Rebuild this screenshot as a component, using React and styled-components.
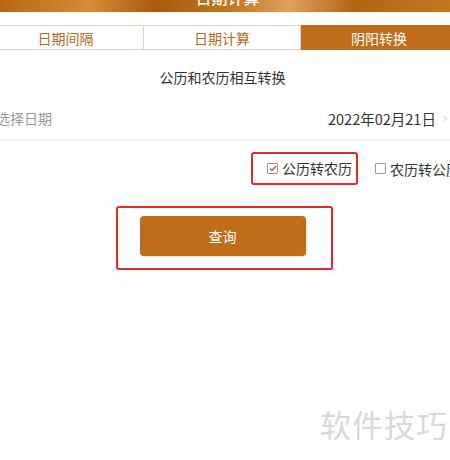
import React, { useState } from "react";
import styled, { createGlobalStyle } from "styled-components";

const GlobalStyle = createGlobalStyle`
  html, body {
    margin: 0;
    padding: 0;
    background: #fff;
    overflow: hidden;
  }
  body {
    font-family: "Noto Sans CJK SC", "Noto Sans", sans-serif;
  }
`;

const Page = styled.div`
  width: 471px;
  margin-left: -13px;
  height: 460px;
  display: flex;
  flex-direction: column;
  background: #fff;
`;

const Banner = styled.div`
  height: 12px;
  overflow: hidden;
  display: flex;
  align-items: flex-end;
  justify-content: center;
  background: linear-gradient(
    100deg,
    #b5620f 0%,
    #d88a35 22%,
    #a95a0e 36%,
    #c47620 52%,
    #e0a060 64%,
    #b3650f 78%,
    #c8781f 100%
  );
`;

const BannerTitle = styled.span`
  color: #fff;
  font-size: 16px;
  line-height: 16px;
  margin-left: 10px;
  margin-bottom: 7px;
  font-weight: 500;
`;

const Tabs = styled.div`
  margin-top: 13px;
  display: grid;
  grid-template-columns: repeat(3, 1fr);
  height: 25px;
`;

const Tab = styled.div`
  display: flex;
  align-items: center;
  justify-content: center;
  font-size: 14px;
  color: ${(p) => (p.$active ? "#fff" : "#b8691c")};
  background: ${(p) => (p.$active ? "#bf6d18" : "#fff")};
  border: 1px solid ${(p) => (p.$active ? "#bf6d18" : "#ead3bb")};
  border-left-width: ${(p) => (p.$first ? "1px" : "0")};
  box-sizing: border-box;
`;

const Title = styled.div`
  margin-top: 17px;
  text-align: center;
  font-size: 14px;
  color: #333;
  line-height: 20px;
`;

const DateRow = styled.div`
  margin-top: 21px;
  display: flex;
  align-items: center;
  justify-content: space-between;
  padding: 0 10px 0 9px;
  height: 20px;
  padding-bottom: 11px;
  border-bottom: 2px solid #f4f4f4;
`;

const Label = styled.span`
  font-size: 14px;
  color: #999;
`;

const DateValue = styled.span`
  display: flex;
  align-items: center;
  gap: 6px;
  font-size: 14.5px;
  color: #333;
`;

const Chevron = styled.span`
  color: #ccc;
  font-size: 11px;
  transform: scaleX(0.7);
`;

const OptionRow = styled.div`
  margin-top: 11px;
  display: flex;
  justify-content: flex-end;
  align-items: center;
  gap: 17px;
  margin-right: -2px;
`;

const Highlight = styled.div`
  display: flex;
  align-items: center;
  border: 2px solid #e42a25;
  border-radius: 3px;
  padding: ${(p) => p.$pad};
`;

const Option = styled.label`
  display: flex;
  align-items: center;
  gap: 4px;
  font-size: 14px;
  color: #333;
  line-height: 20px;
`;

const Box = styled.span`
  width: 9px;
  height: 9px;
  border: 1px solid #999;
  border-radius: 1px;
  display: flex;
  align-items: center;
  justify-content: center;
`;

const ButtonRow = styled.div`
  margin-top: 21px;
  display: flex;
  justify-content: center;
  padding-left: 3px;
`;

const QueryButton = styled.button`
  width: 166px;
  height: 40px;
  border: none;
  border-radius: 4px;
  background: #bf6d18;
  color: #fff;
  font-family: inherit;
  font-size: 14px;
  box-shadow: 0 1px 2px rgba(0, 0, 0, 0.15);
`;

const Spacer = styled.div`
  flex: 1;
`;

const Watermark = styled.div`
  align-self: flex-end;
  margin: 0 10px 14px 0;
  font-size: 31px;
  letter-spacing: 1px;
  color: #d9d9d9;
`;

const Check = ({ checked }) => (
  <Box>
    {checked && (
      <svg width="8" height="7" viewBox="0 0 8 7">
        <path d="M1 3.5 L3 5.5 L7 1" fill="none" stroke="#e0302a" strokeWidth="1.2" />
      </svg>
    )}
  </Box>
);

const tabs = ["日期间隔", "日期计算", "阴阳转换"];

export default function App() {
  const [active, setActive] = useState(2);
  return (
    <>
      <GlobalStyle />
      <Page>
        <Banner>
          <BannerTitle>日期计算</BannerTitle>
        </Banner>
        <Tabs>
          {tabs.map((t, i) => (
            <Tab key={t} $active={i === active} $first={i === 0} onClick={() => setActive(i)}>
              {t}
            </Tab>
          ))}
        </Tabs>
        <Title>公历和农历相互转换</Title>
        <DateRow>
          <Label>选择日期</Label>
          <DateValue>
            2022年02月21日
            <Chevron>&gt;</Chevron>
          </DateValue>
        </DateRow>
        <OptionRow>
          <Highlight $pad="4px 4px 5px 14px">
            <Option>
              <Check checked />
              公历转农历
            </Option>
          </Highlight>
          <Option>
            <Check />
            农历转公历
          </Option>
        </OptionRow>
        <ButtonRow>
          <Highlight $pad="8px 25px 12px 22px">
            <QueryButton>查询</QueryButton>
          </Highlight>
        </ButtonRow>
        <Spacer />
        <Watermark>软件技巧</Watermark>
      </Page>
    </>
  );
}
